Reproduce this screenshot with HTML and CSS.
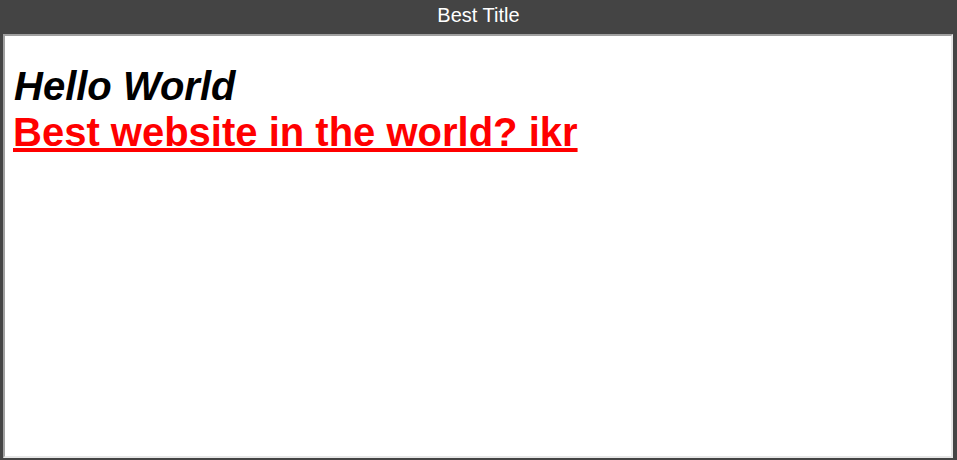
FILE: index.html
```html
<!DOCTYPE html>
<html>
<head>
<meta charset="utf-8">
<title>Best Title</title>
<link rel="stylesheet" href="styles.css">
</head>
<body>
<div class="window">
  <div class="titlebar">Best Title</div>
  <div class="frame">
    <div class="page">
      <div class="hello">Hello World</div>
      <a class="best" href="#">Best website in the world? ikr</a>
    </div>
  </div>
</div>
</body>
</html>
```

FILE: styles.css
```css
html, body {
  margin: 0;
  padding: 0;
  background: #444444;
}
.window {
  width: 957px;
  height: 460px;
  display: flex;
  flex-direction: column;
  font-family: "Liberation Sans", Arial, sans-serif;
}
.titlebar {
  height: 34px;
  line-height: 31px;
  text-align: center;
  color: #ffffff;
  font-size: 20px;
}
.frame {
  margin: 0 4px 2px 3px;
  flex: 1;
  background: #ffffff;
  border-style: solid;
  border-width: 2px;
  border-color: #a0a0a0 #e6e6e6 #e6e6e6 #a0a0a0;
}
.page {
  padding: 27px 8px 8px 8px;
}
.hello {
  font-size: 40px;
  font-weight: bold;
  font-style: italic;
  color: #000;
  line-height: 46px;
  padding-left: 1px;
}
.best {
  display: inline-block;
  font-size: 40px;
  font-weight: bold;
  color: #ff0000;
  text-decoration: underline;
  line-height: 46px;
}
```
